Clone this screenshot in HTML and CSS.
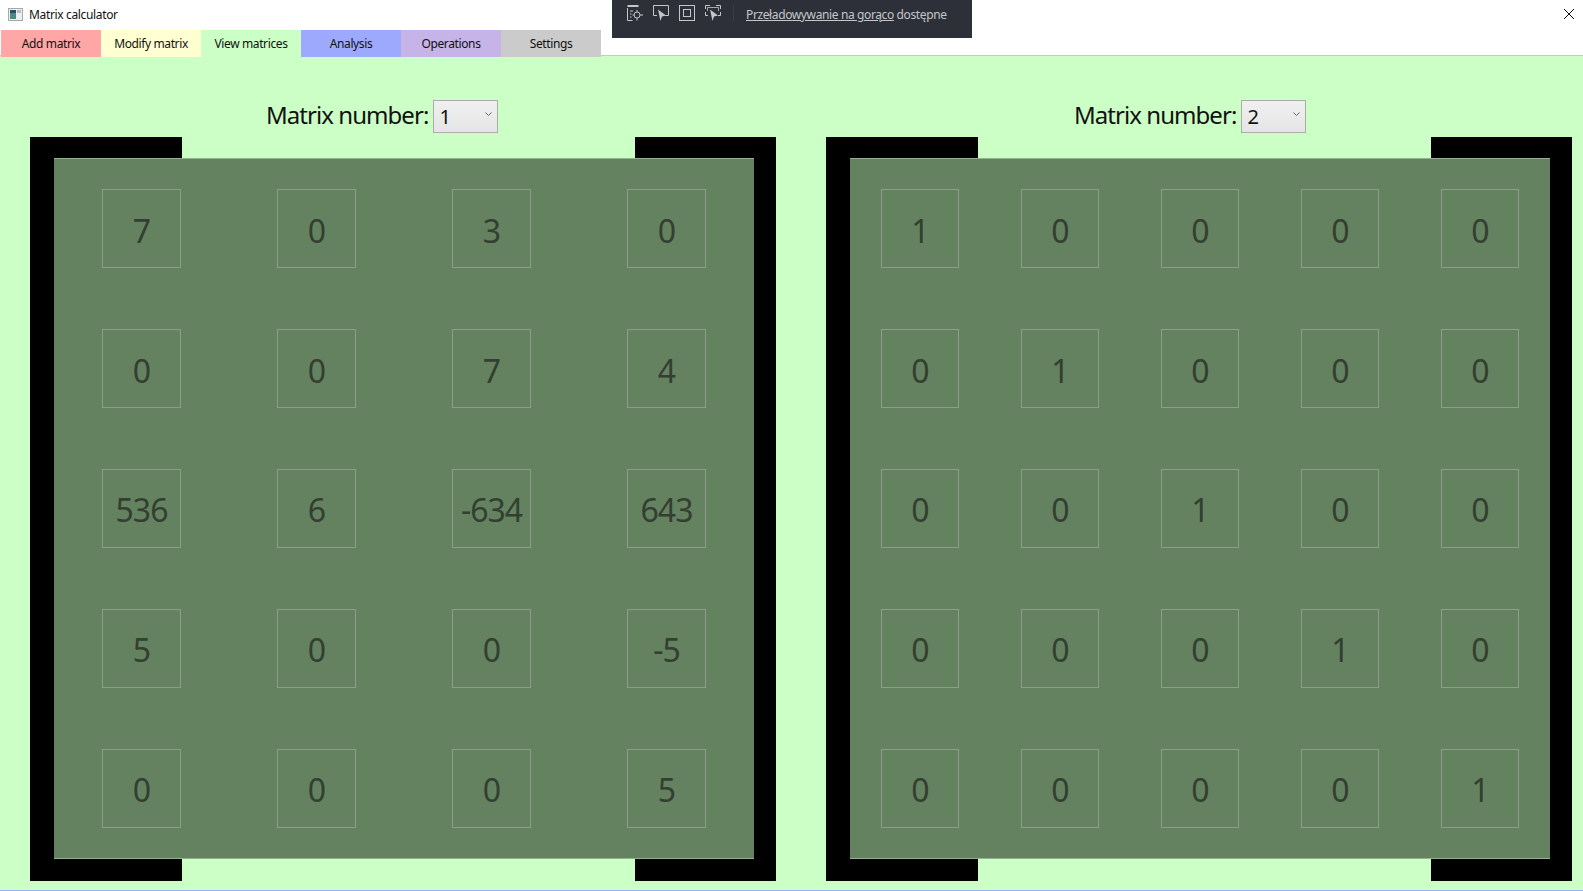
FILE: index.html
```html
<!DOCTYPE html>
<html lang="en">
<head>
    <meta charset="UTF-8">
    <meta name="viewport" content="width=device-width, initial-scale=1.0">
    <title>Matrix calculator</title>
    <link rel="stylesheet" href="styles.css">
</head>
<body>
    <div class="titlebar">
        <svg class="app-icon" width="15" height="13" viewBox="0 0 15 13">
            <rect x="0.5" y="0.5" width="14" height="12" fill="#eef0f0" stroke="#a3a8ab"/>
            <rect x="2" y="2" width="6" height="9" fill="#4d8a84"/>
            <rect x="2" y="2" width="6" height="3" fill="#2c4f63"/>
            <rect x="9" y="2" width="4" height="3" fill="#b5bcc0"/>
        </svg>
        <span class="app-name">Matrix calculator</span>
        <button class="close-btn" aria-label="Close">
            <svg width="12" height="12" viewBox="0 0 12 12"><path d="M1 1l10 10M11 1L1 11" stroke="#111" stroke-width="1" fill="none"/></svg>
        </button>
    </div>

    <!-- wpf debug toolbar, sits on top of the window -->
    <div class="debug-bar">
        <svg width="16" height="16" viewBox="0 0 16 16" fill="none" stroke="#c4c6ca">
            <path d="M0.5 1h11" stroke-width="2"/>
            <path d="M0.5 3v12.5h5M3 6h3M3 9h1.5M3 12h1.5"/>
            <circle cx="10" cy="10" r="3"/>
            <path d="M10 5v2M10 13v2.5M5.5 10h1.5M13 10h3"/>
        </svg>
        <svg width="16" height="16" viewBox="0 0 16 16" fill="none" stroke="#c4c6ca">
            <path d="M4 10.5H0.5v-10h15v10H12"/>
            <path d="M5 4.5l8 6-4 1-1.5 4.5z" fill="#c4c6ca" stroke="none"/>
        </svg>
        <svg width="16" height="16" viewBox="0 0 16 16" fill="none" stroke="#c4c6ca">
            <rect x="0.5" y="0.5" width="15" height="15"/>
            <rect x="4.5" y="4.5" width="7" height="7"/>
        </svg>
        <svg width="16" height="16" viewBox="0 0 16 16" fill="none" stroke="#c4c6ca">
            <path d="M0.5 4V0.5H5M11 0.5h4.5V4M15.5 7v3.5H13M0.5 7v3.5H3"/>
            <path d="M2.5 6V2.5h11V6" stroke-width="0.8"/>
            <path d="M5 4.5l8 6-4 1-1.5 4.5z" fill="#c4c6ca" stroke="none"/>
        </svg>
        <span class="debug-sep"></span>
        <span class="debug-text"><a href="#">Przeładowywanie na gorąco</a> dostępne</span>
    </div>

    <nav class="tabs">
        <a class="tab tab-add" href="#">Add matrix</a>
        <a class="tab tab-modify" href="#">Modify matrix</a>
        <a class="tab tab-view" href="#">View matrices</a>
        <a class="tab tab-analysis" href="#">Analysis</a>
        <a class="tab tab-operations" href="#">Operations</a>
        <a class="tab tab-settings" href="#">Settings</a>
    </nav>

    <main class="views">
        <section class="matrix-view">
            <div class="picker-row picker-left">
                <label for="matrixA">Matrix number:</label>
                <div class="picker">
                    <select id="matrixA"><option>1</option><option>2</option></select>
                    <svg width="7" height="5" viewBox="0 0 7 5"><path d="M0.5 0.5l3 3 3-3" stroke="#666" fill="none"/></svg>
                </div>
            </div>
            <div class="bracket">
                <div class="matrix cols-4">
                    <div class="cell">7</div><div class="cell">0</div><div class="cell">3</div><div class="cell">0</div>
                    <div class="cell">0</div><div class="cell">0</div><div class="cell">7</div><div class="cell">4</div>
                    <div class="cell">536</div><div class="cell">6</div><div class="cell">-634</div><div class="cell">643</div>
                    <div class="cell">5</div><div class="cell">0</div><div class="cell">0</div><div class="cell">-5</div>
                    <div class="cell">0</div><div class="cell">0</div><div class="cell">0</div><div class="cell">5</div>
                </div>
            </div>
        </section>

        <section class="matrix-view">
            <div class="picker-row picker-right">
                <label for="matrixB">Matrix number:</label>
                <div class="picker">
                    <select id="matrixB"><option>2</option><option>1</option></select>
                    <svg width="7" height="5" viewBox="0 0 7 5"><path d="M0.5 0.5l3 3 3-3" stroke="#666" fill="none"/></svg>
                </div>
            </div>
            <div class="bracket">
                <div class="matrix cols-5">
                    <div class="cell">1</div><div class="cell">0</div><div class="cell">0</div><div class="cell">0</div><div class="cell">0</div>
                    <div class="cell">0</div><div class="cell">1</div><div class="cell">0</div><div class="cell">0</div><div class="cell">0</div>
                    <div class="cell">0</div><div class="cell">0</div><div class="cell">1</div><div class="cell">0</div><div class="cell">0</div>
                    <div class="cell">0</div><div class="cell">0</div><div class="cell">0</div><div class="cell">1</div><div class="cell">0</div>
                    <div class="cell">0</div><div class="cell">0</div><div class="cell">0</div><div class="cell">0</div><div class="cell">1</div>
                </div>
            </div>
        </section>
    </main>
</body>
</html>
```
FILE: styles.css
```css
* {
    box-sizing: border-box;
}
html, body {
    height: 100%;
}
body {
    margin: 0;
    display: flex;
    flex-direction: column;
    overflow: hidden;
    background: #ccffc6;
    font-family: "Noto Sans", "Open Sans", sans-serif;
    color: #111;
}

/* title bar */
.titlebar {
    height: 30px;
    flex: none;
    display: flex;
    align-items: center;
    background: #fff;
    padding: 0 0 2px 8px;
    font-size: 12px;
}
.app-icon {
    margin-right: 6px;
}
.app-name {
    letter-spacing: -0.35px;
}
.close-btn {
    margin-left: auto;
    margin-right: 8px;
    padding: 0;
    width: 12px;
    height: 12px;
    border: none;
    background: none;
    display: flex;
}

/* debug toolbar */
.debug-bar {
    position: absolute;
    left: 612px;
    top: 0;
    width: 360px;
    height: 38px;
    padding: 5px 0 0 15px;
    display: flex;
    align-items: flex-start;
    gap: 10px;
    background: #2d3039;
    color: #c4c6ca;
    font-size: 12px;
}
.debug-sep {
    width: 1px;
    height: 16px;
    margin-left: 2px;
    background: #3a3d46;
}
.debug-text {
    margin-left: 2px;
    padding-top: 2px;
    line-height: 16px;
    letter-spacing: -0.38px;
}
.debug-text a {
    color: #c4c6ca;
}

/* tabs */
.tabs {
    height: 26px;
    flex: none;
    display: flex;
    padding-left: 1px;
    background: #fff;
    border-bottom: 1px solid #c6cbc5;
}
.tab {
    width: 100px;
    height: 27px;
    display: flex;
    align-items: center;
    justify-content: center;
    padding-bottom: 1px;
    font-size: 12px;
    color: #111;
    text-decoration: none;
    letter-spacing: -0.38px;
}
.tab-add { background: #ffa6a6; }
.tab-modify { background: #ffffd2; }
.tab-view { background: #ccffc6; }
.tab-analysis { background: #9da9fd; }
.tab-operations { background: #c6b3e8; }
.tab-settings { background: #cbcbcb; }

/* matrices */
.views {
    flex: 1;
    display: flex;
    gap: 50px;
    padding-left: 30px;
    border-bottom: 1px solid #9dadff;
}
.matrix-view {
    width: 746px;
}
.picker-row {
    height: 81px;
    padding-top: 42px;
    display: flex;
    align-items: flex-start;
    gap: 5px;
    font-size: 24px;
    letter-spacing: -0.95px;
}
.picker-left {
    padding-left: 236px;
}
.picker-right {
    padding-left: 248px;
}
.picker-row label {
    line-height: 33px;
}
.picker {
    position: relative;
    width: 65px;
    height: 33px;
}
.picker select {
    width: 100%;
    height: 100%;
    padding: 0 0 0 5px;
    appearance: none;
    border: 1px solid #acacac;
    border-radius: 0;
    background: linear-gradient(#f0f0f0, #e5e5e5);
    font: inherit;
    font-size: 20px;
    color: #111;
}
.picker svg {
    position: absolute;
    right: 6px;
    top: 14px;
}
.bracket {
    width: 746px;
    height: 744px;
    padding: 21px 22px 22px 24px;
    background-color: #000;
    background-image: linear-gradient(#ccffc6, #ccffc6), linear-gradient(#ccffc6, #ccffc6);
    background-repeat: no-repeat;
    background-size: 453px 21px, 453px 22px;
    background-position: 152px 0, 152px 100%;
}
.matrix {
    width: 700px;
    height: 701px;
    display: grid;
    grid-template-rows: repeat(5, 1fr);
    place-items: center;
    background: #648260;
    border-top: 1px solid #94b28f;
    border-bottom: 1px solid #94b28f;
}
.cols-4 {
    grid-template-columns: repeat(4, 1fr);
}
.cols-5 {
    grid-template-columns: repeat(5, 1fr);
}
.cell {
    width: 79px;
    height: 79px;
    padding-top: 3px;
    display: flex;
    align-items: center;
    justify-content: center;
    border: 1px solid #8a9e88;
    font-size: 32px;
    letter-spacing: -1px;
    color: #333f30;
}
.cols-5 .cell {
    width: 78px;
}
```
